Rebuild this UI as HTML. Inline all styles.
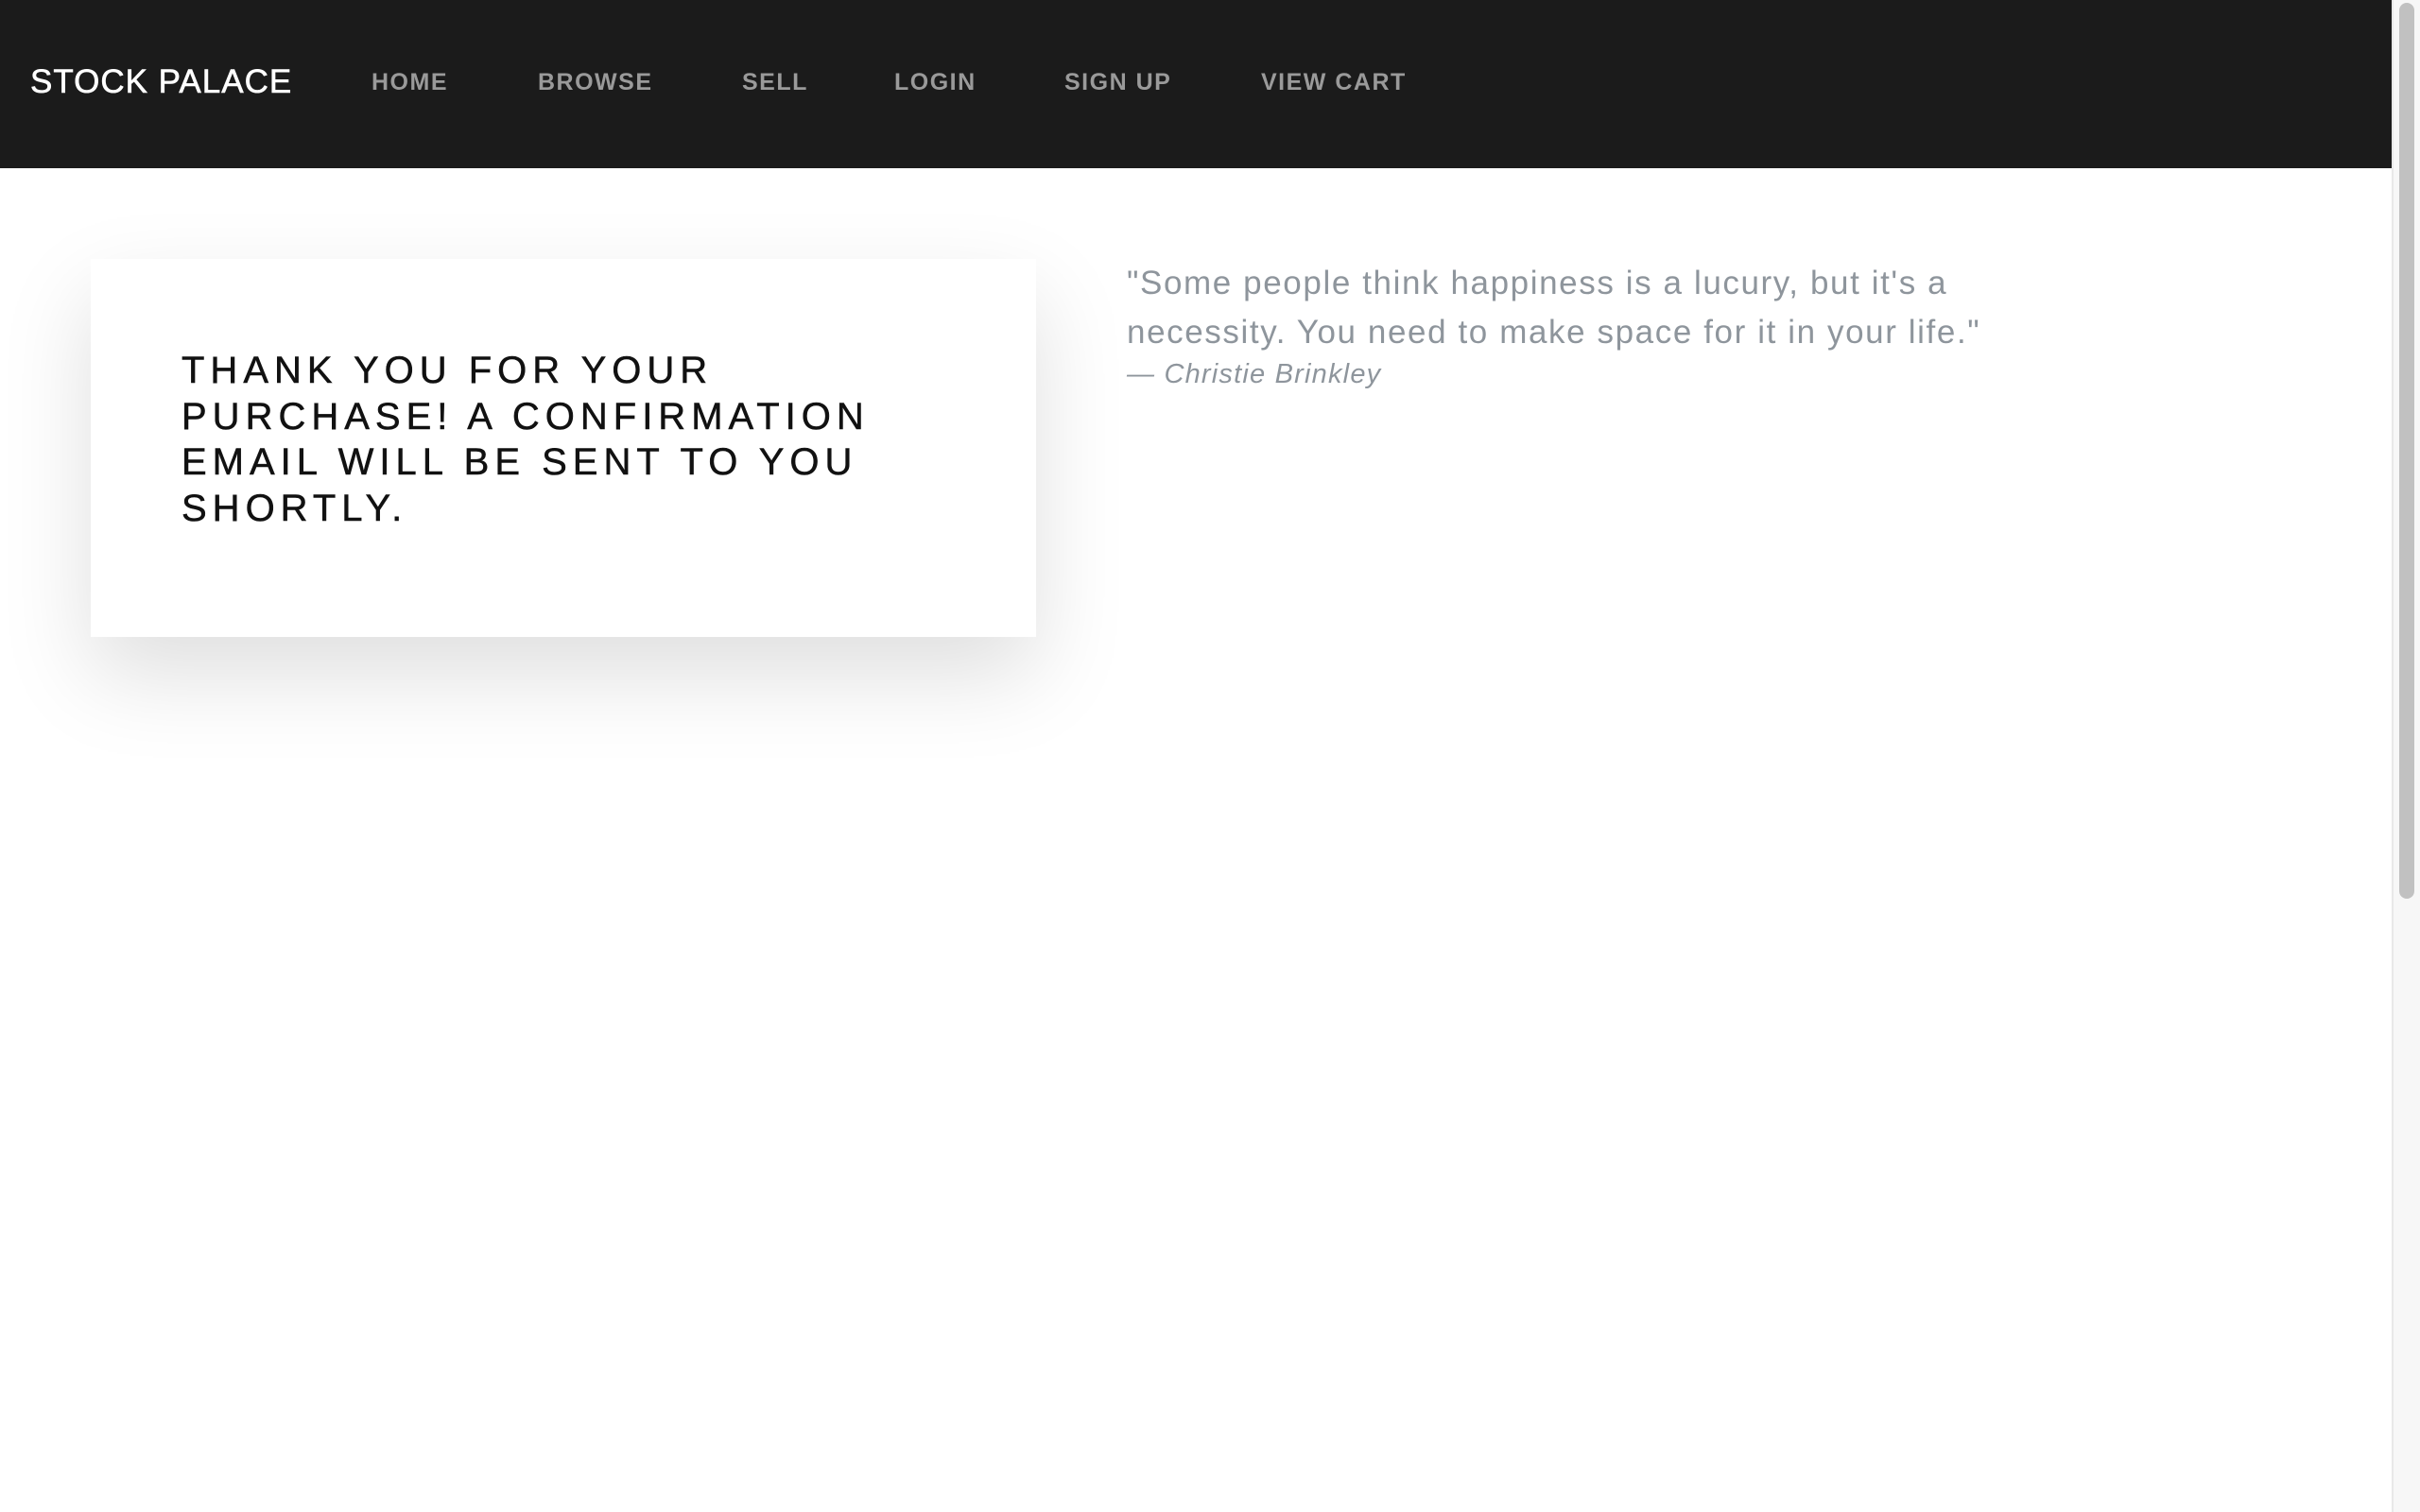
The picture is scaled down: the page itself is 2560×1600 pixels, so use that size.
<!DOCTYPE html>
<html><head><meta charset="utf-8"><style>
*{margin:0;padding:0;box-sizing:border-box}
html,body{width:2560px;height:1600px;overflow:hidden;background:#fff;font-family:"Liberation Sans",sans-serif}
.nav{position:absolute;left:0;top:0;width:2530px;height:178px;background:#1b1b1b}
.brand{position:absolute;left:32px;top:66px;font-size:35px;color:#fff;letter-spacing:1px;line-height:42px;-webkit-text-stroke:0.6px #fff}
.nav a{position:absolute;top:72px;font-size:25px;color:#9a9a9a;letter-spacing:1.5px;line-height:30px;font-weight:bold;text-decoration:none}
.card{position:absolute;left:96px;top:274px;width:1000px;height:400px;background:#fff;box-shadow:0 40px 90px rgba(0,0,0,.13)}
.card h1{position:absolute;left:96px;top:94px;width:820px;font-size:40px;font-weight:normal;color:#111;letter-spacing:6px;line-height:48.5px;-webkit-text-stroke:0.5px #111}
.quote{position:absolute;left:1192px;top:274px;width:1100px;font-size:35px;color:#8e959c;letter-spacing:1.6px;line-height:52px}
.by{position:absolute;left:1192px;top:380px;font-size:29px;font-style:italic;color:#8e959c;letter-spacing:1.2px}
.sb{position:absolute;left:2530px;top:0;width:30px;height:1600px;background:#f7f7f7;border-left:2px solid #e8e8e8}
.thumb{position:absolute;left:2538px;top:3px;width:16px;height:948px;background:#c1c1c1;border-radius:8px}
</style></head><body>
<div class="nav">
<div class="brand">STOCK PALACE</div>
<a style="left:393px">HOME</a>
<a style="left:569px">BROWSE</a>
<a style="left:785px">SELL</a>
<a style="left:946px">LOGIN</a>
<a style="left:1126px">SIGN UP</a>
<a style="left:1334px">VIEW CART</a>
</div>
<div class="card"><h1>THANK YOU FOR YOUR PURCHASE! A CONFIRMATION EMAIL WILL BE SENT TO YOU SHORTLY.</h1></div>
<div class="quote">"Some people think happiness is a lucury, but it's a<br>necessity. You need to make space for it in your life."</div>
<div class="by">— Christie Brinkley</div>
<div class="sb"></div><div class="thumb"></div>
</body></html>
